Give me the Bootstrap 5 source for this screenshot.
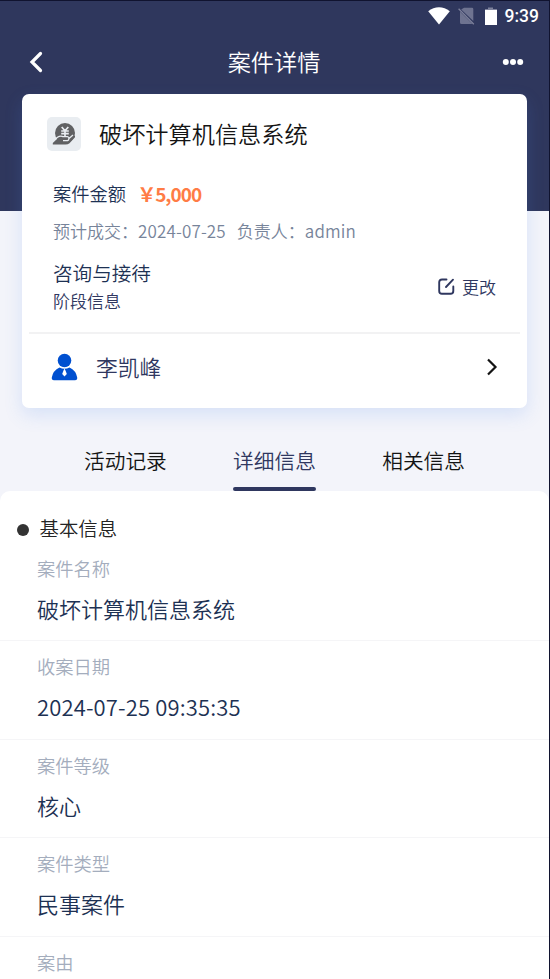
<!DOCTYPE html>
<html lang="zh-CN">
<head>
<meta charset="utf-8">
<meta name="viewport" content="width=device-width, initial-scale=1">
<title>案件详情</title>
<link href="https://cdn.jsdelivr.net/npm/bootstrap@5.3.0/dist/css/bootstrap.min.css" rel="stylesheet">
<style>
body{font-family:"Noto Sans CJK SC",sans-serif;font-weight:350;background:#f3f4fa;color:#141414;line-height:1}
.screen{height:979px;border-top:1px solid #10132f;border-right:1px solid #10132f}
.hero{background:#2f375d;height:210px;color:#fff}
.statusbar{height:32px;padding:0 10px 2px 0;font:500 17.5px/32px Roboto,sans-serif}
.titlebar{height:57px;padding:0 25px 0 29px}
.page-title{font-size:23.2px;line-height:60px;padding:0 0 2px 3px}
.case-card{margin:-117px 22px 0;height:314px;border-radius:7px;background:#fff;box-shadow:0 7px 18px rgba(75,135,240,.17)}
.case-head{height:79px;padding-left:25px}
.case-icon{width:34px;height:34px;border-radius:5px;background:#e9edf1;margin-right:18px}
.case-name{font-size:23.2px;line-height:34px;padding-bottom:2px}
.navy{color:#1d3153}
.indigo{color:#2f375f}
.amount-row{height:41px;padding-left:31px;font-size:18.3px}
.amount{color:#ff7c45;font-size:19px;font-weight:700;letter-spacing:-1px;margin-left:11px}
.meta-row{height:32px;padding-left:31px;font-size:17px;color:#77849a}
.digits{letter-spacing:.15px}
.meta-owner{margin-left:11px}
.stage{height:86px;padding:0 31px 5px 31px}
.stage-name{font-size:19.6px;line-height:28px}
.stage-note{font-size:17px;line-height:28px}
.change{font-size:17px;padding-bottom:1px;gap:7px}
.person{margin:0 7px;height:76px;border-top:2px solid #f2f2f3;padding:0 22px 9px 22px}
.person-name{font-size:21.8px;margin-left:18px}
.tabs{height:83px;padding:16px 84px 0}
.tab-item{font-size:20.7px;height:67px;line-height:73px;position:relative}
.tab-item.active::after{content:"";position:absolute;left:0;right:0;bottom:0;height:4px;border-radius:2px;background:#2f375f}
.panel{height:488px;border-radius:10px 10px 0 0}
.section-title{height:52px;padding:21px 0 0 17px;font-size:19.4px;line-height:30px;color:#242424}
.dot{width:12px;height:12px;border-radius:50%;background:#333;margin:4px 10.500px 0 0}
.field{height:98.4px;padding-left:37px;border-bottom:1px solid #f5f5f7}
.field:last-child{height:44px;border:0}
.field-label{font-size:18.3px;line-height:28px;padding-top:11px;color:#a4adbd}
.field-value{font-size:22px;line-height:32px;margin-top:10px;color:#1d3153}
</style>
</head>
<body>
<div class="screen overflow-hidden">
  <header class="hero">
    <div class="statusbar d-flex justify-content-end align-items-center">
      <svg width="22" height="18" viewBox="0 0 22 18"><path fill="#fff" d="M.2 4.200C6.600-1 15.400-1 21.800 4.200L11 17.500Z"/></svg>
      <svg class="ms-2" width="17" height="18" viewBox="0 0 17 18"><path fill="#6e7390" d="M6 .8H14q1.300 0 1.300 1.300V14L3.200 2.600ZM2 4.500L14.500 17H3.500Q2 17 2 15.500Z"/><path d="M.6 1.800L15.800 17.200" stroke="#7d819b" stroke-width="1.300"/></svg>
      <svg class="ms-2" width="18" height="19" viewBox="0 0 18 19"><path fill="#7d819b" d="M2 3V2h3V.5h5V2h4v1Z"/><path fill="#fff" d="M2 3h12v15H2Z"/></svg>
      <span class="ms-1">9:39</span>
    </div>
    <div class="titlebar d-flex justify-content-between align-items-center">
      <svg width="14" height="22" viewBox="0 0 14 22"><path d="M11.500 2.500L3 11l8.500 8.500" fill="none" stroke="#fff" stroke-width="3.200" stroke-linecap="round"/></svg>
      <div class="page-title">案件详情</div>
      <svg width="22" height="8" viewBox="0 0 22 8" fill="#fff"><circle cx="3.800" cy="4" r="3"/><circle cx="11" cy="4" r="3"/><circle cx="18.200" cy="4" r="3"/></svg>
    </div>
  </header>
  <section class="case-card position-relative">
    <div class="case-head d-flex align-items-center">
      <div class="case-icon d-flex align-items-center justify-content-center">
        <svg width="24" height="24" viewBox="0 0 24 24"><circle cx="13" cy="11" r="10" fill="#606163"/><path d="M9.700 5L13 8.800l3.300-3.800M13 8.800V14.500M9.200 9h7.600M9.200 11.600h7.600" fill="none" stroke="#e9edf1" stroke-width="1.700"/><path d="M.8 22.500V21L5.500 16.500Q8.500 14.500 11 15.800H15.200Q16.800 16.800 15.200 18H12H16L20.800 14Q23.600 12.800 23 15.200L17.500 21.200Q16 22.500 13.500 22.500Z" fill="#606163"/><path d="M3.500 17L5.500 15.300Q8.500 13.300 11 14.600H15.400Q18 15.500 16.400 17L21 13M11 18.700H15.500Q17.200 18 16.600 16.800" fill="none" stroke="#e9edf1" stroke-width="1.300"/></svg>
      </div>
      <div class="case-name">破坏计算机信息系统</div>
    </div>
    <div class="amount-row d-flex align-items-center navy"><span>案件金额</span><span class="amount">￥5,000</span></div>
    <div class="meta-row d-flex align-items-center"><span>预计成交：<span class="digits">2024-07-25</span></span><span class="meta-owner">负责人：<span class="digits">admin</span></span></div>
    <div class="stage d-flex align-items-center justify-content-between">
      <div><div class="stage-name navy">咨询与接待</div><div class="stage-note indigo">阶段信息</div></div>
      <div class="change indigo d-flex align-items-center">
        <svg width="17" height="17" viewBox="0 0 17 17" fill="none" stroke="#2f375f" stroke-width="1.900" stroke-linecap="round"><path d="M8.500 1.500H4Q1.200 1.500 1.200 4.300V13Q1.200 15.800 4 15.800H12.500Q15.300 15.800 15.300 13V8.500M8 9L15 1.700"/></svg>
        <span>更改</span>
      </div>
    </div>
    <div class="person d-flex align-items-center indigo">
      <svg width="27" height="28" viewBox="0 0 27 28"><circle cx="13.500" cy="7.500" r="6.800" fill="#0050d0"/><path d="M8.500 14.500Q13.500 17 18.500 14.500Q25 17.500 26.200 24.500Q26.500 27.300 24 27.300H3Q.5 27.300.8 24.500Q2 17.500 8.500 14.500Z" fill="#0050d0"/><path d="M13.500 15.500L14.700 18 15.800 21 13.500 23.500 11.200 21 12.300 18Z" fill="#fff"/></svg>
      <span class="person-name">李凯峰</span>
      <svg class="ms-auto" width="12" height="18" viewBox="0 0 12 18"><path d="M2 1.500L9.500 9 2 16.500" fill="none" stroke="#141414" stroke-width="2.200"/></svg>
    </div>
  </section>
  <nav class="tabs d-flex justify-content-between">
    <div class="tab-item">活动记录</div>
    <div class="tab-item active indigo">详细信息</div>
    <div class="tab-item">相关信息</div>
  </nav>
  <main class="panel bg-white">
    <div class="section-title d-flex align-items-center"><span class="dot"></span><span>基本信息</span></div>
    <div class="field"><div class="field-label">案件名称</div><div class="field-value">破坏计算机信息系统</div></div>
    <div class="field"><div class="field-label">收案日期</div><div class="field-value digits">2024-07-25 09:35:35</div></div>
    <div class="field"><div class="field-label">案件等级</div><div class="field-value">核心</div></div>
    <div class="field"><div class="field-label">案件类型</div><div class="field-value">民事案件</div></div>
    <div class="field"><div class="field-label">案由</div></div>
  </main>
</div>
<script src="https://cdn.jsdelivr.net/npm/bootstrap@5.3.0/dist/js/bootstrap.bundle.min.js"></script>
</body>
</html>
